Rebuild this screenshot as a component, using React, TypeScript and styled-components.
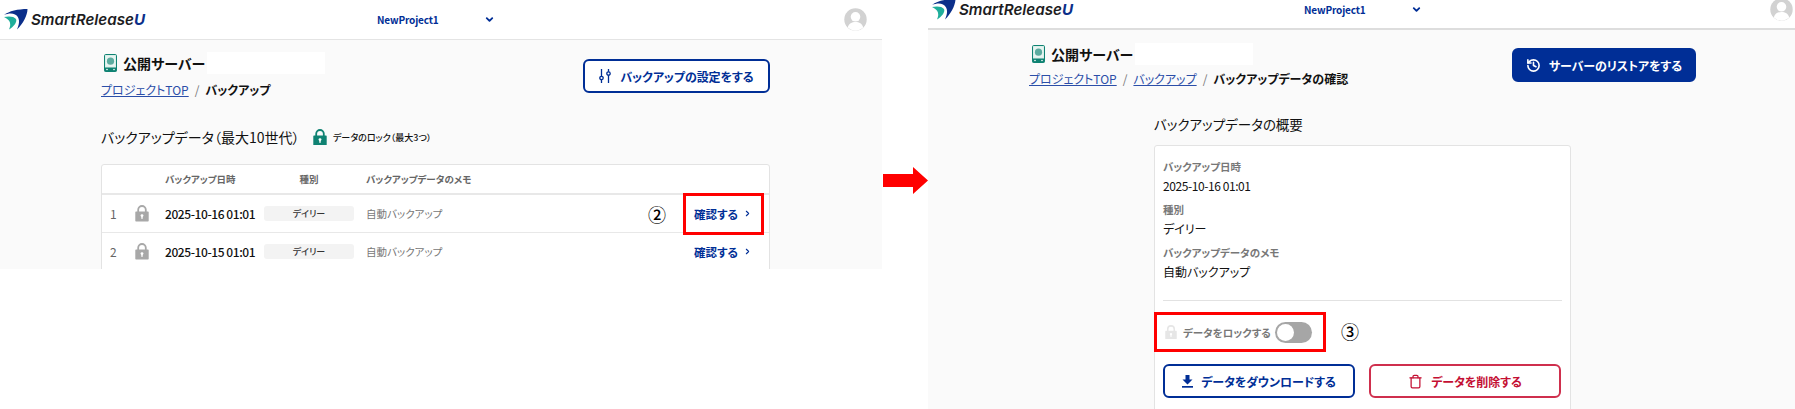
import { createGlobalStyle, styled } from "styled-components";
import { ChevronDown, ChevronRight, History, Trash } from "lucide-react";

const navy = "#002e96";
const FONT = `"Noto Sans CJK JP", "Noto Sans", sans-serif`;

const GlobalStyle = createGlobalStyle`
  * { box-sizing: border-box; }
  html, body { margin: 0; padding: 0; background: #fff; }
  body { font-family: ${FONT}; color: #111; font-feature-settings: "palt"; }
`;

const Page = styled.div`
  width: 1795px;
  height: 409px;
  display: flex;
  align-items: flex-start;
  overflow: hidden;
`;

const Panel = styled.section<{ $w: number; $h: number }>`
  position: relative;
  flex: none;
  width: ${(p) => p.$w}px;
  height: ${(p) => p.$h}px;
  background: #fafafa;
  overflow: hidden;
`;

const ArrowSlot = styled.div`
  flex: none;
  width: 46px;
  padding: 167px 0 0 1px;
  display: flex;
`;

const Header = styled.header<{ $h: number; $pb: number; $projectLeft: number; $right: number }>`
  height: ${(p) => p.$h}px;
  background: #fff;
  border-bottom: ${(p) => (p.$h < 35 ? "2px solid #ddd" : "1px solid #e4e4e4")};
  display: flex;
  align-items: center;
  padding: 0 ${(p) => p.$right}px ${(p) => p.$pb}px 4px;

  .project {
    margin-left: ${(p) => p.$projectLeft}px;
    width: 107px;
    font-size: 10px;
    letter-spacing: -0.15px;
    font-weight: 700;
    color: ${navy};
    font-family: ${FONT};
  }
  svg { flex: none; }
`;

const LogoWrap = styled.div`
  display: flex;
  align-items: center;
  gap: 3px;
  width: 142px;
  flex: none;
`;

const LogoText = styled.span`
  font-family: Inter, "Liberation Sans", sans-serif;
  font-style: italic;
  font-size: 15.2px;
  font-weight: 600;
  color: #1d1d1f;
  white-space: nowrap;
  b { color: #0b2f8a; font-weight: 700; }
`;

const Avatar = styled.div`
  margin-left: auto;
  width: 23px;
  height: 23px;
  flex: none;
`;

const TopRow = styled.div<{ $top: number; $btnLeft: number }>`
  padding: ${(p) => p.$top}px 0 0 101px;
  display: flex;
  align-items: flex-start;
  .crumbs-col { width: ${(p) => p.$btnLeft - 101}px; flex: none; }
`;

const TitleLine = styled.div`
  display: flex;
  align-items: center;
  height: 22px;
  padding-left: 3px;
  gap: 6px;
  svg { flex: none; }
  h1 {
    margin: 0;
    font-size: 14px;
    font-weight: 700;
    line-height: 22px;
    white-space: nowrap;
  }
`;

const RedactBlock = styled.span`
  display: block;
  width: 118px;
  height: 22px;
  margin-left: -4px;
  background: #fff;
`;

const Crumbs = styled.nav<{ $mt: number }>`
  margin-top: ${(p) => p.$mt}px;
  font-size: 12px;
  line-height: 22px;
  white-space: nowrap;
  a { color: #2b4ea8; text-decoration: underline; }
  i { font-style: normal; color: #777; margin: 0 6px; }
  strong { font-weight: 700; color: #111; }
`;

const ActionButton = styled.button<{ $tone: "outline" | "solid" | "danger"; $w: number; $mt?: number; $gap?: number }>`
  width: ${(p) => p.$w}px;
  height: 34px;
  margin-top: ${(p) => p.$mt ?? 0}px;
  flex: none;
  display: flex;
  align-items: center;
  justify-content: center;
  gap: ${(p) => p.$gap ?? 8}px;
  border-radius: 6px;
  font-family: ${FONT};
  font-feature-settings: "palt";
  font-size: 12px;
  letter-spacing: -0.1px;
  font-weight: 700;
  padding: 0;
  border: 2px solid ${(p) => (p.$tone === "danger" ? "#cf2f4d" : navy)};
  color: ${(p) => (p.$tone === "danger" ? "#c40f33" : p.$tone === "solid" ? "#fff" : navy)};
  background: ${(p) => (p.$tone === "solid" ? navy : "#fff")};
`;

const Content = styled.div`
  padding: 0 112px 0 101px;
`;

const SectionRow = styled.div`
  margin-top: 24px;
  display: flex;
  align-items: center;
  height: 24px;
  h2 {
    margin: 0;
    width: 212px;
    font-size: 14px;
    font-weight: 400;
    white-space: nowrap;
  }
  span {
    margin-left: 6px;
    font-size: 9px;
    font-weight: 500;
    white-space: nowrap;
  }
`;

const Table = styled.div`
  margin-top: 15px;
  background: #fff;
  border: 1px solid #e3e3e3;
  border-radius: 3px;
  width: 669px;
`;

const Row = styled.div<{ $head?: boolean }>`
  display: grid;
  grid-template-columns: 33px 30px 99px 102px 1fr 75px;
  align-items: center;
  height: ${(p) => (p.$head ? 30 : 38)}px;
  border-bottom: ${(p) => (p.$head ? "2px solid #e8e8e8" : "1px solid #e8e8e8")};
`;

const HeadCell = styled.div<{ $center?: boolean }>`
  font-size: 9.5px;
  font-weight: 700;
  color: #666;
  text-align: ${(p) => (p.$center ? "center" : "left")};
  padding-right: ${(p) => (p.$center ? 12 : 0)}px;
  white-space: nowrap;
`;

const Num = styled.div`
  padding-left: 8px;
  font-size: 12px;
  color: #666;
`;

const DateText = styled.span<{ $weight?: number }>`
  font-size: 12px;
  letter-spacing: -0.42px;
  font-weight: ${(p) => p.$weight ?? 400};
  white-space: nowrap;
`;

const Badge = styled.div`
  width: 90px;
  height: 15px;
  background: #f3f3f3;
  border-radius: 3px;
  font-size: 9px;
  font-weight: 500;
  line-height: 15px;
  text-align: center;
  color: #333;
`;

const Memo = styled.div`
  font-size: 10.5px;
  color: #777;
  white-space: nowrap;
`;

const ConfirmLink = styled.a`
  display: flex;
  align-items: center;
  gap: 5px;
  font-size: 11.5px;
  font-weight: 700;
  color: ${navy};
  white-space: nowrap;
`;

const Callout = styled.div<{ $x: number; $y: number; $w: number; $h: number }>`
  position: absolute;
  left: ${(p) => p.$x}px;
  top: ${(p) => p.$y}px;
  width: ${(p) => p.$w}px;
  height: ${(p) => p.$h}px;
  border: 3px solid #f00;
`;

const StepMark = styled.div<{ $x: number; $y: number }>`
  position: absolute;
  left: ${(p) => p.$x}px;
  top: ${(p) => p.$y}px;
  font-size: 18px;
  font-weight: 500;
  line-height: 18px;
  color: #000;
`;

const Summary = styled.div`
  margin: 24px 0 0 226px;
  width: 417px;
  h2 {
    margin: 0 0 11px;
    font-size: 13.5px;
    line-height: 20px;
    font-weight: 400;
    white-space: nowrap;
  }
`;

const Card = styled.div`
  background: #fff;
  border: 1px solid #e3e3e3;
  border-radius: 3px;
  padding: 12px 8px 40px;
`;

const Field = styled.div`
  height: 43px;
  dt { font-size: 10.5px; line-height: 17px; font-weight: 700; color: #777; }
  dd { margin: 2px 0 0; font-size: 12px; line-height: 18px; font-weight: 400; color: #111; white-space: nowrap; }
`;

const Fields = styled.dl`
  margin: 0;
  padding-bottom: 13px;
  border-bottom: 1px solid #e2e2e2;
  display: flex;
  flex-direction: column;
`;

const LockRow = styled.div`
  display: flex;
  align-items: center;
  height: 21px;
  margin: 21px 0 0 2px;
  font-size: 10.5px;
  font-weight: 700;
  color: #777;
  span { margin-left: 6px; width: 92px; white-space: nowrap; }
`;

const Toggle = styled.div`
  width: 37px;
  height: 21px;
  border-radius: 11px;
  background: #a6a6a6;
  padding: 2px;
  &::before {
    content: "";
    display: block;
    width: 17px;
    height: 17px;
    border-radius: 50%;
    background: #fff;
  }
`;

const ButtonRow = styled.div`
  margin-top: 21px;
  display: flex;
  gap: 14px;
`;

const LockIcon = ({ color, size = 14 }: { color: string; size?: number }) => (
  <svg width={size} height={size * 1.18} viewBox="0 0 14 16.5">
    <path d="M3.2 7V4.8a3.8 3.8 0 0 1 7.6 0V7" fill="none" stroke={color} strokeWidth="1.8" />
    <path d="M1 6.6h12a.7.7 0 0 1 .7.7v8.4a.7.7 0 0 1-.7.7H1a.7.7 0 0 1-.7-.7V7.3a.7.7 0 0 1 .7-.7z" fill={color} />
    <circle cx="7" cy="10.6" r="1.4" fill="#fff" />
    <rect x="6.3" y="11" width="1.4" height="2.8" fill="#fff" />
  </svg>
);

const LogoMark = () => (
  <svg width="24" height="21" viewBox="0 0 24 21">
    <path d="M0 6C5 2 14 0 23.500 0C23.500 6 19 15 13 20.500C16 14 16 8 11 5.500C8 4 4 4.500 0 6z" fill="#0b2f8a" />
    <path d="M0 8C4 7 10 7 12 10C13.500 13 9.500 18 5 20.500C7.500 15 6.500 11 0 8z" fill="#1fae9b" />
  </svg>
);

const ServerIcon = () => (
  <svg width="13" height="18" viewBox="0 0 13 18">
    <rect x=".5" y=".5" width="12" height="17" rx="1.2" fill="#d9efe9" stroke="#0f8272" />
    <rect x="2" y="2" width="9" height="10.500" fill="#e8f4f1" />
    <circle cx="6.500" cy="7.200" r="3.600" fill="#5bab9f" />
    <rect x=".5" y="13.500" width="12" height="4" fill="#0f8272" />
    <circle cx="3" cy="15.500" r=".8" fill="#fff" />
    <circle cx="10" cy="15.500" r=".8" fill="#fff" />
  </svg>
);

const UserAvatar = () => (
  <svg width="23" height="23" viewBox="0 0 23 23">
    <circle cx="11.500" cy="11.500" r="11.200" fill="#d2d2d2" />
    <circle cx="11.500" cy="8.800" r="4.800" fill="#fff" />
    <path d="M3.800 19.500c1-4 4-5.500 7.700-5.500s6.700 1.500 7.700 5.500a11 11 0 0 1-15.400 0z" fill="#fff" />
  </svg>
);

const RedArrow = () => (
  <svg width="45" height="27" viewBox="0 0 45 27">
    <path d="M0 7h30V0l15 13.500L30 27v-7H0z" fill="#f00" />
  </svg>
);

const SlidersIcon = () => (
  <svg width="12" height="14" viewBox="0 0 12 14" fill={navy} stroke={navy} strokeWidth="1.3">
    <path d="M2.500 0v14M9.500 0v14" fill="none" />
    <circle cx="2.500" cy="9" r="1.700" fill="#fff" />
    <circle cx="9.500" cy="4.500" r="1.700" fill="#fff" />
  </svg>
);

const DownloadIcon = () => (
  <svg width="11" height="13" viewBox="0 0 11 13" fill={navy}>
    <path d="M3.500 0h4v4.500h3L5.500 9.500.5 4.500h3z" />
    <rect x="0" y="11" width="11" height="1.700" />
  </svg>
);

function TopBar(props: { h: number; pb: number; projectLeft: number; right: number }) {
  return (
    <Header $h={props.h} $pb={props.pb} $projectLeft={props.projectLeft} $right={props.right}>
      <LogoWrap>
        <LogoMark />
        <LogoText>SmartRelease<b>U</b></LogoText>
      </LogoWrap>
      <div className="project">NewProject1</div>
      <ChevronDown size={11} color={navy} strokeWidth={4} />
      <Avatar><UserAvatar /></Avatar>
    </Header>
  );
}

const rows = [
  { n: 1, date: "2025-10-16 01:01" },
  { n: 2, date: "2025-10-15 01:01" },
];

export default function App() {
  return (
    <Page>
      <GlobalStyle />
      <Panel $w={882} $h={269}>
        <TopBar h={40} pb={0} projectLeft={231} right={15} />
        <TopRow $top={12} $btnLeft={583}>
          <div className="crumbs-col">
            <TitleLine>
              <ServerIcon />
              <h1>公開サーバー</h1>
              <RedactBlock />
            </TitleLine>
            <Crumbs $mt={5}>
              <a>プロジェクトTOP</a><i>/</i><strong>バックアップ</strong>
            </Crumbs>
          </div>
          <ActionButton $tone="outline" $w={187} $mt={7} $gap={9}>
            <SlidersIcon />バックアップの設定をする
          </ActionButton>
        </TopRow>
        <Content>
          <SectionRow>
            <h2>バックアップデータ（最大10世代）</h2>
            <LockIcon color="#0f8272" />
            <span>データのロック（最大3つ）</span>
          </SectionRow>
          <Table>
            <Row $head>
              <div /><div />
              <HeadCell>バックアップ日時</HeadCell>
              <HeadCell $center>種別</HeadCell>
              <HeadCell>バックアップデータのメモ</HeadCell>
              <div />
            </Row>
            {rows.map((r) => (
              <Row key={r.n}>
                <Num>{r.n}</Num>
                <LockIcon color="#a8a8a8" />
                <DateText $weight={500}>{r.date}</DateText>
                <Badge>デイリー</Badge>
                <Memo>自動バックアップ</Memo>
                <ConfirmLink>確認する<ChevronRight size={9} strokeWidth={3} /></ConfirmLink>
              </Row>
            ))}
          </Table>
        </Content>
        <StepMark $x={648} $y={205}>②</StepMark>
        <Callout $x={683} $y={193} $w={81} $h={42} />
      </Panel>

      <ArrowSlot><RedArrow /></ArrowSlot>

      <Panel $w={867} $h={409}>
        <TopBar h={30} pb={10} projectLeft={230} right={2} />
        <TopRow $top={13} $btnLeft={584}>
          <div className="crumbs-col">
            <TitleLine>
              <ServerIcon />
              <h1>公開サーバー</h1>
              <RedactBlock />
            </TitleLine>
            <Crumbs $mt={3}>
              <a>プロジェクトTOP</a><i>/</i><a>バックアップ</a><i>/</i><strong>バックアップデータの確認</strong>
            </Crumbs>
          </div>
          <ActionButton $tone="solid" $w={184} $mt={5}>
            <History size={15} strokeWidth={2.6} />サーバーのリストアをする
          </ActionButton>
        </TopRow>
        <Summary>
          <h2>バックアップデータの概要</h2>
          <Card>
            <Fields>
              <Field><dt>バックアップ日時</dt><dd><DateText>2025-10-16 01:01</DateText></dd></Field>
              <Field><dt>種別</dt><dd>デイリー</dd></Field>
              <Field><dt>バックアップデータのメモ</dt><dd>自動バックアップ</dd></Field>
            </Fields>
            <LockRow>
              <LockIcon color="#e6e6e6" size={12} />
              <span>データをロックする</span>
              <Toggle />
            </LockRow>
            <ButtonRow>
              <ActionButton $tone="outline" $w={192}>
                <DownloadIcon />データをダウンロードする
              </ActionButton>
              <ActionButton $tone="danger" $w={192}>
                <Trash size={15} />データを削除する
              </ActionButton>
            </ButtonRow>
          </Card>
        </Summary>
        <Callout $x={226} $y={312} $w={172} $h={40} />
        <StepMark $x={413} $y={322}>③</StepMark>
      </Panel>
    </Page>
  );
}
